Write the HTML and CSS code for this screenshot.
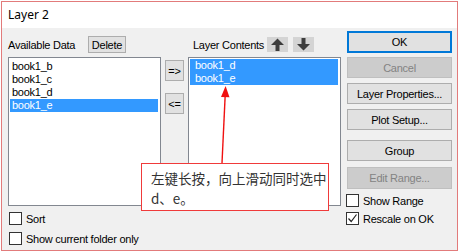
FILE: index.html
```html
<!DOCTYPE html>
<html>
<head>
<meta charset="utf-8">
<link rel="stylesheet" href="styles.css">
</head>
<body>
<div class="frame">
  <div class="titlebar">Layer 2</div>
  <div class="content">
    <div class="col col-avail">
      <div class="hdr">
        <span class="lbl">Available Data</span>
        <div class="btn delete">Delete</div>
      </div>
      <div class="list">
        <div class="item">book1_b</div>
        <div class="item">book1_c</div>
        <div class="item">book1_d</div>
        <div class="item sel">book1_e</div>
      </div>
      <div class="chk chk-sort"><span class="box"></span><span>Sort</span></div>
      <div class="chk chk-folder"><span class="box"></span><span>Show current folder only</span></div>
    </div>
    <div class="col col-move">
      <div class="btn move">=&gt;</div>
      <div class="btn move move2">&lt;=</div>
    </div>
    <div class="col col-layer">
      <div class="hdr">
        <span class="lbl lbl-layer">Layer Contents</span>
        <div class="arrowbtn">
          <svg width="21" height="15" viewBox="0 0 21 15"><polygon points="10.5,1.5 4,8 8.5,8 8.5,14 12.5,14 12.5,8 17,8" fill="#3c3c3c"/></svg>
        </div>
        <div class="arrowbtn">
          <svg width="21" height="15" viewBox="0 0 21 15"><polygon points="10.5,13.5 4,7 8.5,7 8.5,1 12.5,1 12.5,7 17,7" fill="#3c3c3c"/></svg>
        </div>
      </div>
      <div class="list list-layer">
        <div class="item sel">book1_d</div>
        <div class="item sel">book1_e</div>
      </div>
    </div>
    <div class="col col-btns">
      <div class="btn big ok">OK</div>
      <div class="btn big dis cancel">Cancel</div>
      <div class="btn big props">Layer Properties...</div>
      <div class="btn big plot">Plot Setup...</div>
      <div class="btn big group">Group</div>
      <div class="btn big dis edit">Edit Range...</div>
      <div class="chk chk-range"><span class="box"></span><span>Show Range</span></div>
      <div class="chk chk-rescale"><span class="box"><svg width="11" height="11" viewBox="0 0 11 11"><polyline points="1.5,5.5 4.2,8.5 9.5,1.5" fill="none" stroke="#222" stroke-width="1.2"/></svg></span><span>Rescale on OK</span></div>
    </div>
  </div>
  <div class="callout">左键长按，向上滑动同时选中<br>d、e。</div>
  <svg class="pointer" width="20" height="80" viewBox="0 0 20 80">
    <line x1="7" y1="78" x2="10.2" y2="10" stroke="#f01010" stroke-width="1.4"/>
    <polygon points="10.6,1 6,12 14.5,12.3" fill="#f01010"/>
  </svg>
</div>
</body>
</html>
```

FILE: styles.css
```css
html, body {
  margin: 0;
  padding: 0;
  background: #ffffff;
}
body {
  padding: 1px;
  width: 459px;
  height: 252px;
  box-sizing: border-box;
  overflow: hidden;
}
.frame {
  position: relative;
  width: 457px;
  height: 250px;
  box-sizing: border-box;
  border: 1px solid #e27b7b;
  background: #f0f0f0;
  font-family: "Liberation Sans", Arial, sans-serif;
  font-size: 11px;
  letter-spacing: -0.25px;
  color: #000;
}
.titlebar {
  height: 26px;
  background: #ffffff;
  font-family: "Noto Sans", "Liberation Sans", sans-serif;
  font-size: 12px;
  letter-spacing: 0;
  line-height: 26px;
  padding-left: 6px;
  color: #000;
}
.content {
  display: flex;
  align-items: flex-start;
  padding: 3px 0 0 6px;
}
.col {
  display: flex;
  flex-direction: column;
}
.col-avail {
  width: 153px;
  padding-top: 5px;
}
.hdr {
  display: flex;
  align-items: center;
  height: 17px;
}
.lbl {
  width: 80px;
  flex: none;
  white-space: nowrap;
}
.btn {
  box-sizing: border-box;
  background: #e1e1e1;
  border: 1px solid #adadad;
  display: flex;
  align-items: center;
  justify-content: center;
  color: #000;
  white-space: nowrap;
}
.delete {
  width: 38px;
  height: 17px;
}
.list {
  margin-top: 4px;
  height: 149px;
  box-sizing: border-box;
  background: #fff;
  border: 1px solid #828790;
  padding: 2px 2px 0 1px;
}
.item {
  height: 13px;
  line-height: 13px;
  padding-left: 2px;
}
.item.sel {
  background: #3399ff;
  color: #fff;
}
.list-layer {
  padding-top: 1px;
}
.list-layer .item {
  padding-left: 5px;
}
.chk {
  display: flex;
  align-items: center;
  height: 13px;
  gap: 4px;
}
.box {
  box-sizing: border-box;
  width: 13px;
  height: 13px;
  border: 1px solid #333;
  background: #fff;
  display: flex;
  align-items: center;
  justify-content: center;
}
.chk-sort {
  margin-top: 6px;
  margin-left: 1px;
}
.chk-folder {
  margin-top: 7px;
  margin-left: 1px;
}
.col-move {
  width: 19px;
  margin-left: 4px;
  padding-top: 29px;
}
.move {
  height: 21px;
}
.move2 {
  margin-top: 12px;
}
.col-layer {
  width: 153px;
  margin-left: 4px;
  padding-top: 5px;
}
.lbl-layer {
  width: 79px;
  box-sizing: border-box;
  padding-left: 5px;
}
.arrowbtn {
  width: 21px;
  height: 15px;
  background: #d4d4d4;
  margin-right: 5px;
  display: flex;
}
.col-btns {
  width: 105px;
  margin-left: 6px;
}
.big {
  height: 21px;
  margin-top: 5px;
}
.ok {
  height: 22px;
  margin-top: 0;
  border: 1px solid #0078d7;
  box-shadow: inset 0 0 0 1px #0078d7;
}
.cancel {
  margin-top: 4px;
}
.dis {
  background: #cccccc;
  border-color: #bfbfbf;
  color: #838383;
}
.group {
  margin-top: 10px;
}
.edit {
  margin-top: 6px;
  height: 22px;
}
.chk-range {
  margin-top: 5px;
  margin-left: -1px;
}
.chk-rescale {
  margin-top: 5px;
  margin-left: -1px;
}
.callout {
  position: absolute;
  left: 139px;
  top: 161px;
  width: 188px;
  height: 48px;
  box-sizing: border-box;
  background: #fff;
  border: 1px solid #f03a3a;
  padding: 4px 0 0 9px;
  font-family: "Noto Sans CJK SC", "Noto Sans", sans-serif;
  font-size: 13.5px;
  letter-spacing: 0;
  line-height: 20px;
  color: #333;
  white-space: nowrap;
}
.pointer {
  position: absolute;
  left: 213px;
  top: 83px;
}
```
